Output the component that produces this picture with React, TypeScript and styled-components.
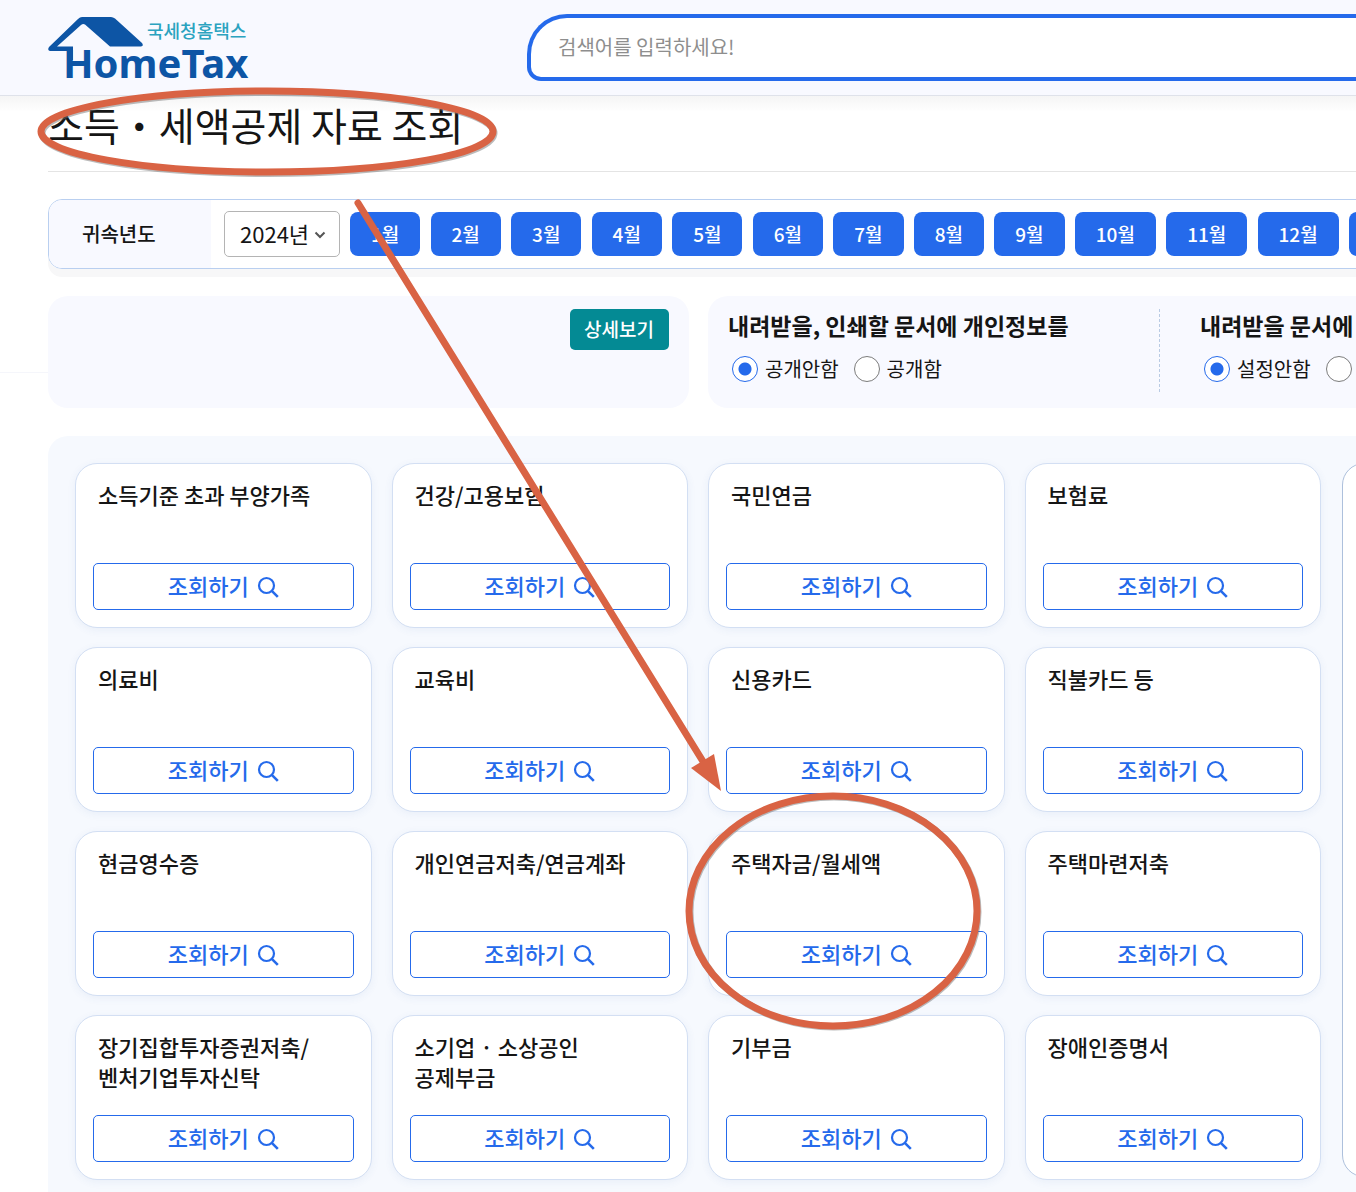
import React, { useState } from "react";
import styled, { createGlobalStyle } from "styled-components";

const BLUE = "#256aeb";
const PALE = "#f8f9ff";

const GlobalStyle = createGlobalStyle`
  *, *::before, *::after { box-sizing: border-box; }
  body {
    margin: 0;
    background: #fff;
    color: #151515;
    font-family: "Noto Sans CJK KR", "Noto Sans", sans-serif;
    font-size: 20px;
  }
  button, input, select { font-family: inherit; }
`;

const Page = styled.div`
  position: relative;
  overflow: hidden;
`;

const Header = styled.header`
  display: flex;
  align-items: flex-start;
  height: 96px;
  padding: 14px 0 0 48px;
  background: ${PALE};
  border-bottom: 1px solid #dfe2ea;
`;

const LogoLink = styled.a`
  flex: none;
  display: block;
  width: 204px;
  margin-right: 275px;

  svg { display: block; overflow: visible; }
`;

const SearchBox = styled.input`
  flex: 1;
  min-width: 0;
  height: 67px;
  padding: 0 0 2px 27px;
  border: 4px solid ${BLUE};
  border-right: 0;
  border-radius: 40px 0 0 14px;
  background: #fff;
  color: #151515;
  font-size: 20px;
  outline: none;

  &::placeholder { color: #8e8e8e; opacity: 1; }
`;

const Main = styled.main`
  width: calc(100% + 272px);
  padding-left: 48px;
  background: linear-gradient(#f5f5f5, #fff 16px);
`;

const Title = styled.h1`
  margin: 0;
  padding-bottom: 19px;
  border-bottom: 1px solid #e4e4e4;
  font-size: 39px;
  line-height: 56px;
  font-weight: 400;
`;

const FilterBar = styled.section`
  display: flex;
  height: 70px;
  margin-top: 27px;
  padding-right: 201px;
  overflow: hidden;
  border: 1px solid #b9cff0;
  border-radius: 14px;
`;

const FilterShadow = styled.div`
  border-radius: 14px;
  box-shadow: 0 8px 0 #f7f7f8;
`;

const FilterLabel = styled.label`
  flex: none;
  display: flex;
  align-items: center;
  width: 162px;
  padding: 0 0 2px 33px;
  background: ${PALE};
  font-weight: 500;
`;

const YearField = styled.div`
  position: relative;
  flex: none;
  align-self: center;
  width: 116px;
  height: 46px;
  margin: 0 10px 0 13px;

  svg {
    position: absolute;
    right: 14px;
    top: 18px;
    pointer-events: none;
  }
`;

const YearSelect = styled.select`
  width: 100%;
  height: 100%;
  padding: 0 0 2px 15px;
  appearance: none;
  border: 1px solid #b4b4b4;
  border-radius: 5px;
  background: #fff;
  color: #151515;
  font-size: 22px;
`;

const Months = styled.div`
  flex: 1;
  display: flex;
  align-items: center;
  justify-content: space-between;
`;

const MonthButton = styled.button`
  flex: none;
  height: 44px;
  padding: 0 21px 2px;
  border: 0;
  border-radius: 8px;
  background: ${BLUE};
  color: #fff;
  font-size: 19px;
  font-weight: 500;
`;

const InfoRow = styled.div`
  position: relative;
  display: flex;
  gap: 19px;
  margin-top: 27px;

  &::before {
    content: "";
    position: absolute;
    top: 76px;
    left: -48px;
    width: 48px;
    height: 1px;
    background: #f5f6fb;
  }
`;

const InfoCard = styled.section<{ $grow?: boolean }>`
  flex: ${(p) => (p.$grow ? "1" : "0 0 641px")};
  display: flex;
  justify-content: ${(p) => (p.$grow ? "flex-start" : "flex-end")};
  align-items: flex-start;
  height: 112px;
  padding: 13px 20px;
  border-radius: 20px;
  background: ${PALE};
`;

const DetailButton = styled.button`
  height: 41px;
  padding: 0 15px 2px 14px;
  border: 0;
  border-radius: 5px;
  background: #048a94;
  color: #fff;
  font-size: 19px;
  font-weight: 500;
`;

const OptionGroup = styled.fieldset<{ $divided?: boolean }>`
  flex: none;
  width: ${(p) => (p.$divided ? "432px" : "400px")};
  height: 83px;
  margin: 0 40px 0 0;
  padding: 0;
  border: 0;
  ${(p) => p.$divided && "border-right: 1px dashed #b9cbe4;"}
`;

const OptionTitle = styled.legend`
  float: left;
  width: 100%;
  padding: 0;
  font-size: 23px;
  line-height: 32px;
  font-weight: 700;
  white-space: nowrap;
`;

const Options = styled.div`
  clear: both;
  display: flex;
  gap: 15px;
  padding: 14px 0 0 4px;
`;

const Option = styled.label`
  display: flex;
  align-items: center;
  gap: 7px;
  line-height: 28px;
  white-space: nowrap;
`;

const Radio = styled.input`
  flex: none;
  width: 26px;
  height: 26px;
  margin: 0;
  appearance: none;
  border: 1px solid #7c7c7c;
  border-radius: 50%;
  background: #fff;

  &:checked {
    border-color: ${BLUE};
    background: radial-gradient(circle, ${BLUE} 6px, #fff 7px);
  }
`;

const Panel = styled.section`
  display: flex;
  gap: 21px;
  margin-top: 28px;
  padding: 27px 27px 12px;
  border-radius: 20px 20px 0 0;
  background: #f6f9fe;
`;

const CardGrid = styled.div`
  flex: 1;
  display: grid;
  grid-template-columns: repeat(4, 1fr);
  gap: 19px 20px;
`;

const Card = styled.article`
  display: flex;
  flex-direction: column;
  justify-content: space-between;
  min-height: 165px;
  padding: 15px 17px 17px;
  border: 1px solid #d3dff3;
  border-radius: 22px;
  background: #fff;
  box-shadow: 0 2px 8px rgba(60, 100, 170, 0.07);
`;

const CardTitle = styled.h2`
  margin: 0;
  padding-left: 5px;
  font-size: 22px;
  line-height: 30px;
  font-weight: 500;
  white-space: pre-line;
`;

const LookupButton = styled.button`
  display: flex;
  align-items: center;
  justify-content: center;
  gap: 8px;
  height: 47px;
  padding: 0;
  border: 1px solid ${BLUE};
  border-radius: 5px;
  background: #fff;
  color: ${BLUE};
  font-size: 22px;
  font-weight: 500;
`;

const LookupText = styled.span`
  padding-bottom: 4px;
`;

const Summary = styled.aside`
  flex: none;
  width: 259px;
  margin-bottom: 3px;
  border: 1px solid #adc0dc;
  border-radius: 22px;
  background: #fff;
`;

const Markup = styled.svg`
  position: absolute;
  top: 0;
  left: 0;
  pointer-events: none;
`;

const Logo = () => (
  <svg width="204" height="80" viewBox="48 14 204 80" role="img" aria-label="HomeTax">
    <path
      fill="#0d55a5"
      d="M82 17H111Q113 17 115 18.500L142 43Q144 46 141 46.500H110L85 24.500Q83 23.500 81 25L57 46.500H73V60H67V51H50Q47 50 49 47L78 19Q80 17 82 17Z"
    />
    <text x="147" y="38" fill="#2ba3bf" fontSize="18" fontWeight="500">국세청홈택스</text>
    <text x="63" y="78" fill="#0d55a5" fontSize="40" fontWeight="700" fontFamily="'Noto Sans', sans-serif">HomeTax</text>
  </svg>
);

const SearchIcon = () => (
  <svg width="22" height="22" viewBox="0 0 22 22" fill="none" stroke="currentColor" strokeWidth="2.200" aria-hidden="true">
    <circle cx="9.500" cy="9.500" r="7.500" />
    <path d="M14.800 14.800L20.800 20.800" strokeWidth="2.600" />
  </svg>
);

const cards = [
  "소득기준 초과 부양가족",
  "건강/고용보험",
  "국민연금",
  "보험료",
  "의료비",
  "교육비",
  "신용카드",
  "직불카드 등",
  "현금영수증",
  "개인연금저축/연금계좌",
  "주택자금/월세액",
  "주택마련저축",
  "장기집합투자증권저축/\n벤처기업투자신탁",
  "소기업 · 소상공인\n공제부금",
  "기부금",
  "장애인증명서",
];

const months = [...Array.from({ length: 12 }, (_, i) => `${i + 1}월`), "전체"];

type ChoiceProps = { name: string; title: string; choices: string[]; divided?: boolean };

const Choice = ({ name, title, choices, divided }: ChoiceProps) => {
  const [value, setValue] = useState(choices[0]);
  return (
    <OptionGroup $divided={divided}>
      <OptionTitle>{title}</OptionTitle>
      <Options>
        {choices.map((c) => (
          <Option key={c}>
            <Radio type="radio" name={name} checked={value === c} onChange={() => setValue(c)} />
            {c}
          </Option>
        ))}
      </Options>
    </OptionGroup>
  );
};

export default function App() {
  return (
    <>
      <GlobalStyle />
      <Page>
        <Header>
          <LogoLink href="#"><Logo /></LogoLink>
          <SearchBox type="search" aria-label="검색어" placeholder="검색어를 입력하세요!" />
        </Header>
        <Main>
          <Title>소득・세액공제 자료 조회</Title>
          <FilterShadow>
            <FilterBar>
              <FilterLabel htmlFor="year">귀속년도</FilterLabel>
              <YearField>
                <YearSelect id="year" defaultValue="2024">
                  <option value="2024">2024년</option>
                  <option value="2023">2023년</option>
                </YearSelect>
                <svg width="12" height="12" viewBox="0 0 12 12" fill="none" stroke="#555" strokeWidth="2" aria-hidden="true">
                  <path d="M1.500 3.500L6 8L10.500 3.500" />
                </svg>
              </YearField>
              <Months>
                {months.map((m) => (
                  <MonthButton key={m} type="button">{m}</MonthButton>
                ))}
              </Months>
            </FilterBar>
          </FilterShadow>
          <InfoRow>
            <InfoCard>
              <DetailButton type="button">상세보기</DetailButton>
            </InfoCard>
            <InfoCard $grow>
              <Choice name="privacy" title="내려받을, 인쇄할 문서에 개인정보를" choices={["공개안함", "공개함"]} divided />
              <Choice name="password" title="내려받을 문서에 비밀번호를" choices={["설정안함", "설정함"]} />
            </InfoCard>
          </InfoRow>
          <Panel>
            <CardGrid>
              {cards.map((title) => (
                <Card key={title}>
                  <CardTitle>{title}</CardTitle>
                  <LookupButton type="button">
                    <LookupText>조회하기</LookupText>
                    <SearchIcon />
                  </LookupButton>
                </Card>
              ))}
            </CardGrid>
            <Summary />
          </Panel>
        </Main>
        <Markup width="1000" height="1050" viewBox="0 0 1000 1050" fill="none" stroke="#d96344" strokeWidth="7" aria-hidden="true">
          <g stroke="#777" strokeOpacity="0.5">
            <ellipse cx="268" cy="133" rx="226" ry="40.500" />
            <ellipse cx="834" cy="912" rx="144" ry="115" />
          </g>
          <ellipse cx="267" cy="131.500" rx="226" ry="40.500" />
          <ellipse cx="833" cy="911" rx="144" ry="115" />
          <path d="M358 203L704 763" strokeLinecap="round" />
          <path d="M721 791L691 768L714 754Z" fill="#d96344" stroke="none" />
        </Markup>
      </Page>
    </>
  );
}
